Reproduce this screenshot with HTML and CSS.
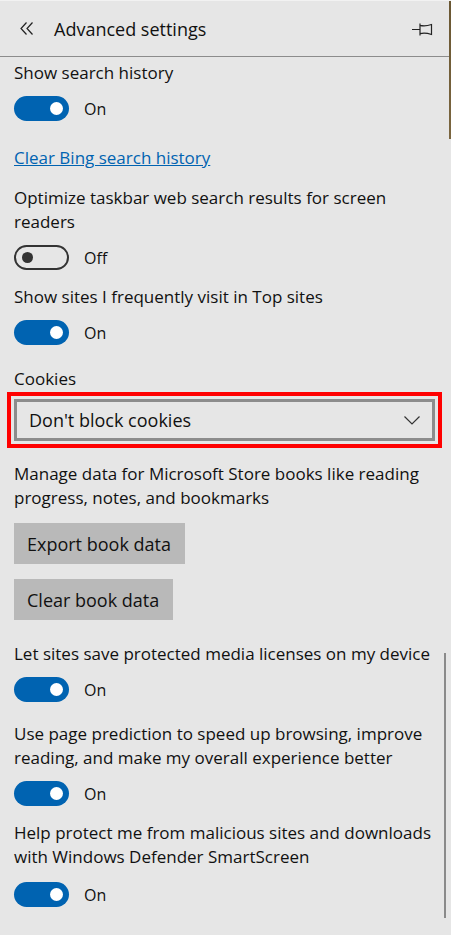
FILE: index.html
```html
<!DOCTYPE html>
<html lang="en">
<head>
    <meta charset="UTF-8">
    <meta name="viewport" content="width=device-width, initial-scale=1.0">
    <title>Advanced settings</title>
    <link rel="stylesheet" href="styles.css">
</head>
<body>

<div class="panel">
    <!-- Header -->
    <div class="header">
        <svg class="back-icon" width="14" height="13" viewBox="0 0 14 13">
            <path d="M6.5 0.5 L1 6.5 L6.5 12.5 M12.5 0.5 L7 6.5 L12.5 12.5" fill="none" stroke="#222" stroke-width="1.2"/>
        </svg>
        <span class="title">Advanced settings</span>
        <svg class="pin-icon" width="22" height="13" viewBox="0 0 22 13">
            <path d="M1 6.5 H9 M9 0.5 V12.5 M9 2.3 Q14 3.6 20.5 1.5 V11.5 Q14 9.4 9 10.7" fill="none" stroke="#222" stroke-width="1.2"/>
        </svg>
    </div>

    <div class="content">
        <div class="label first">Show search history</div>
        <div class="toggle-row">
            <span class="toggle on"><span class="knob"></span></span>
            <span class="toggle-text">On</span>
        </div>

        <a class="link" href="#">Clear Bing search history</a>

        <div class="label after-link">Optimize taskbar web search results for screen readers</div>
        <div class="toggle-row">
            <span class="toggle off"><span class="knob"></span></span>
            <span class="toggle-text">Off</span>
        </div>

        <div class="label gap-sm">Show sites I frequently visit in Top sites</div>
        <div class="toggle-row">
            <span class="toggle on"><span class="knob"></span></span>
            <span class="toggle-text">On</span>
        </div>

        <!-- Cookies -->
        <div class="label gap-lg">Cookies</div>
        <div class="highlight">
            <div class="select">
                <span>Don't block cookies</span>
                <svg width="16" height="9" viewBox="0 0 16 9">
                    <path d="M0.5 0.5 L8 8 L15.5 0.5" fill="none" stroke="#333" stroke-width="1.2"/>
                </svg>
            </div>
        </div>

        <!-- Books -->
        <div class="label after-select">Manage data for Microsoft Store books like reading progress, notes, and bookmarks</div>
        <button class="button export">Export book data</button>
        <button class="button">Clear book data</button>

        <div class="label gap-lg">Let sites save protected media licenses on my device</div>
        <div class="toggle-row">
            <span class="toggle on"><span class="knob"></span></span>
            <span class="toggle-text">On</span>
        </div>

        <div class="label gap-md">Use page prediction to speed up browsing, improve reading, and make my overall experience better</div>
        <div class="toggle-row">
            <span class="toggle on"><span class="knob"></span></span>
            <span class="toggle-text">On</span>
        </div>

        <div class="label gap-xs">Help protect me from malicious sites and downloads with Windows Defender SmartScreen</div>
        <div class="toggle-row loose">
            <span class="toggle on"><span class="knob"></span></span>
            <span class="toggle-text">On</span>
        </div>
    </div>

    <div class="scrollbar"></div>
</div>

</body>
</html>
```

FILE: styles.css
```css
/* Global Styles */
body {
    margin: 0;
    padding: 0;
    background: #e6e6e6;
    font-family: 'Open Sans', 'Noto Sans', sans-serif;
    font-size: 17px;
    line-height: 24px;
    color: #111;
}

.panel {
    position: relative;
    min-height: 935px;
    border-top: 1px solid #f2f2f2;
    box-sizing: border-box;
    background: linear-gradient(to bottom, #6a5733 0, #7b6640 138px, #e6e6e6 138px) right top / 2px 100% no-repeat;
}

/* Header */
.header {
    display: flex;
    align-items: center;
    height: 55px;
    border-bottom: 1px solid #8c8c8c;
    margin-right: 2px;
}

.back-icon {
    margin-left: 20px;
}

.title {
    margin-left: 20px;
    font-size: 18px;
    color: #111;
}

.pin-icon {
    margin-left: auto;
    margin-right: 16px;
    margin-top: 1px;
}

/* Content */
.content {
    padding: 0 14px 0 14px;
}

.label {
    margin-top: 15px;
}

.label.first { margin-top: 4px; }
.label.after-link { margin-top: 16px; }
.label.gap-sm { margin-top: 15px; }
.label.gap-lg { margin-top: 22px; }
.label.gap-md { margin-top: 20px; }
.label.gap-xs { margin-top: 15px; }
.label.after-select { margin-top: 14px; }

.link {
    display: block;
    margin-top: 25px;
    color: #0063b1;
    text-decoration: underline;
    width: max-content;
}

/* Toggle switches */
.toggle-row {
    display: flex;
    align-items: center;
    margin-top: 11px;
    height: 25px;
}

.toggle-row.loose {
    margin-top: 13px;
}

.toggle {
    display: flex;
    align-items: center;
    width: 55px;
    height: 25px;
    border-radius: 13px;
    box-sizing: border-box;
}

.toggle.on {
    background: #0063b1;
    justify-content: flex-end;
    padding-right: 6px;
}

.toggle.on .knob {
    width: 13px;
    height: 13px;
    border-radius: 50%;
    background: #fff;
}

.toggle.off {
    border: 2px solid #333;
    padding-left: 6px;
}

.toggle.off .knob {
    width: 11px;
    height: 11px;
    border-radius: 50%;
    background: #333;
}

.toggle-text {
    margin-left: 15px;
    font-size: 16px;
}

/* Cookies select, highlighted */
.highlight {
    margin: 1px -5px 0 -7px;
    border: 4px solid #f00;
    padding: 3px;
}

.select {
    display: flex;
    align-items: center;
    justify-content: space-between;
    height: 36px;
    border: 3px solid #8c8c8c;
    padding: 0 12px 0 12px;
    font-size: 18px;
}

/* Buttons */
.button {
    display: block;
    height: 41px;
    margin-top: 15px;
    padding: 0 14px 0 13px;
    border: none;
    background: #b9b9b9;
    font-family: 'Open Sans', 'Noto Sans', sans-serif;
    font-size: 18px;
    color: #111;
}

.button.export {
    margin-top: 13px;
}

.scrollbar {
    position: absolute;
    left: 444px;
    top: 652px;
    width: 2px;
    height: 265px;
    background: #8a8a8a;
}
```
